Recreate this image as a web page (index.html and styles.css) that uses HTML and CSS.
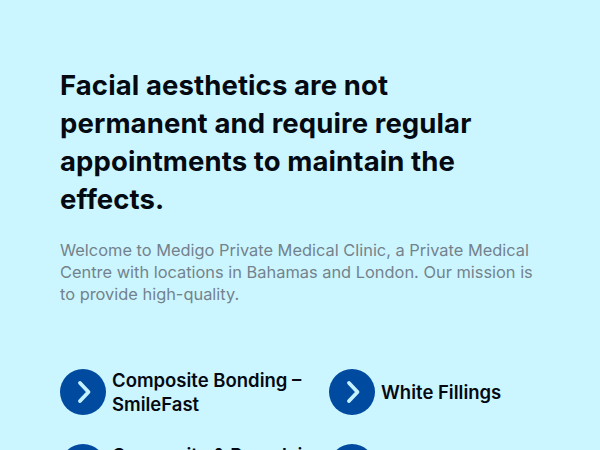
FILE: index.html
```html
<!DOCTYPE html>
<html lang="en">
<head>
    <meta charset="UTF-8">
    <meta name="viewport" content="width=device-width, initial-scale=1.0">
    <title>Medigo Private Medical Clinic</title>
    <link rel="stylesheet" href="styles.css">
</head>
<body>
    <section class="intro">
        <h1>Facial aesthetics are not permanent and require regular appointments to maintain the effects.</h1>
        <p>Welcome to Medigo Private Medical Clinic, a Private Medical Centre with locations in Bahamas and London. Our mission is to provide high-quality.</p>
        <div class="treatments">
            <a class="treatment" href="#">
                <span class="arrow"><svg viewBox="0 0 24 24" width="24" height="24"><path d="M9 3 L17.5 12 L9 21" /></svg></span>
                <span class="name">Composite Bonding – SmileFast</span>
            </a>
            <a class="treatment" href="#">
                <span class="arrow"><svg viewBox="0 0 24 24" width="24" height="24"><path d="M9 3 L17.5 12 L9 21" /></svg></span>
                <span class="name">White Fillings</span>
            </a>
            <a class="treatment" href="#">
                <span class="arrow"><svg viewBox="0 0 24 24" width="24" height="24"><path d="M9 3 L17.5 12 L9 21" /></svg></span>
                <span class="name">Composite &amp; Porcelain Veneers</span>
            </a>
            <a class="treatment" href="#">
                <span class="arrow"><svg viewBox="0 0 24 24" width="24" height="24"><path d="M9 3 L17.5 12 L9 21" /></svg></span>
                <span class="name">Teeth Whitening</span>
            </a>
        </div>
    </section>
</body>
</html>
```

FILE: styles.css
```css
html, body {
    height: 100%;
    overflow: hidden;
}
body {
    margin: 0;
    background-color: #ccf6ff;
    font-family: "Inter", "Liberation Sans", sans-serif;
}
.intro {
    padding: 66px 60px 0;
}
h1 {
    margin: 0 0 21px;
    width: 440px;
    font-size: 27.5px;
    line-height: 38px;
    font-weight: 700;
    letter-spacing: 0.1px;
    color: #050a12;
}
p {
    margin: 0 0 63px;
    font-size: 16.4px;
    line-height: 22px;
    color: #73828c;
}
.treatments {
    display: grid;
    grid-template-columns: 269px 1fr;
    row-gap: 27px;
}
.treatment {
    display: flex;
    align-items: center;
    gap: 6px;
    text-decoration: none;
}
.arrow {
    flex: none;
    display: flex;
    align-items: center;
    justify-content: center;
    width: 46px;
    height: 46px;
    border-radius: 50%;
    background-color: #004aa0;
}
.arrow path {
    fill: none;
    stroke: #c4f2ff;
    stroke-width: 3.8;
    stroke-linecap: round;
    stroke-linejoin: round;
}
.name {
    width: 215px;
    font-size: 18.5px;
    line-height: 24px;
    font-weight: 600;
    color: #050a12;
}
```
